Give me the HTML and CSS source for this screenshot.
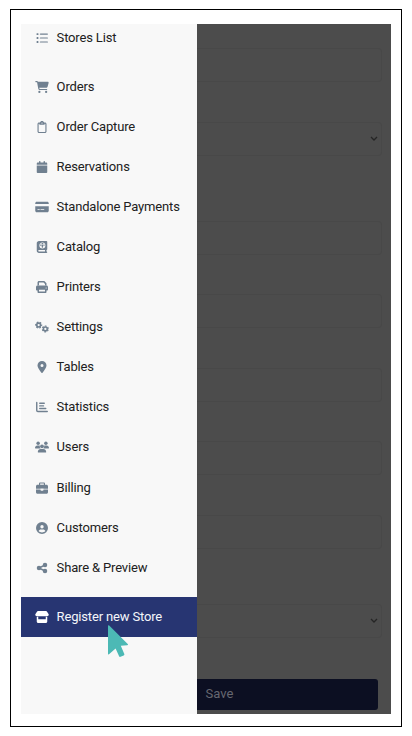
FILE: index.html
```html
<!DOCTYPE html>
<html lang="en">
<head>
<meta charset="utf-8">
<title>Register new Store</title>
<link rel="stylesheet" href="styles.css">
</head>
<body>
<div class="frame">
  <div class="screen">
    <nav class="sidebar">
      <a class="item first"><svg class="icon" viewBox="0 0 512 512"><path d="M40 48h48q16 0 16 16v48q0 16-16 16H40q-16 0-16-16V64q0-16 16-16zM192 64h288q32 0 32 24t-32 24H192q-32 0-32-24t32-24zm0 168h288q32 0 32 24t-32 24H192q-32 0-32-24t32-24zm0 168h288q32 0 32 24t-32 24H192q-32 0-32-24t32-24zM40 216h48q16 0 16 16v48q0 16-16 16H40q-16 0-16-16v-48q0-16 16-16zm0 168h48q16 0 16 16v48q0 16-16 16H40q-16 0-16-16v-48q0-16 16-16z"/></svg><span>Stores List</span></a>
      <a class="item"><svg class="icon" viewBox="0 0 576 512"><path d="M0 24C0 10.700 10.700 0 24 0h45.500c22 0 41.500 12.800 50.600 32h411c26.300 0 45.500 25 38.600 50.400l-41 152.300c-8.500 31.400-37 53.300-69.500 53.300H170.700l5.400 28.500c2.200 11.300 12.100 19.500 23.600 19.500H488c13.300 0 24 10.700 24 24s-10.700 24-24 24H199.700c-34.600 0-64.300-24.600-70.700-58.500L77.400 54.500C76.700 50.700 73.400 48 69.500 48H24C10.700 48 0 37.300 0 24z"/><circle cx="176" cy="464" r="48"/><circle cx="464" cy="464" r="48"/></svg><span>Orders</span></a>
      <a class="item"><svg class="icon" viewBox="0 0 384 512"><path fill-rule="evenodd" d="M280 64h40c35 0 64 29 64 64v320c0 35-29 64-64 64H64c-35 0-64-29-64-64V128c0-35 29-64 64-64h40C113 27 150 0 192 0s79 27 88 64zM64 112c-9 0-16 7-16 16v320c0 9 7 16 16 16h256c9 0 16-7 16-16V128c0-9-7-16-16-16h-16v24c0 13-11 24-24 24H104c-13 0-24-11-24-24v-24zM192 64a24 24 0 1 0 0 48 24 24 0 0 0 0-48z"/></svg><span>Order Capture</span></a>
      <a class="item"><svg class="icon" viewBox="0 0 448 512"><path d="M128 0c18 0 32 14 32 32v32h128V32c0-18 14-32 32-32s32 14 32 32v32h48c27 0 48 21 48 48v48H0v-48c0-27 21-48 48-48h48V32c0-18 14-32 32-32zM0 192h448v272c0 27-21 48-48 48H48c-27 0-48-21-48-48z"/></svg><span>Reservations</span></a>
      <a class="item"><svg class="icon" viewBox="0 0 576 512"><path fill-rule="evenodd" d="M64 32h448c35 0 64 29 64 64v32H0V96c0-35 29-64 64-64zM0 224h576v192c0 35-29 64-64 64H64c-35 0-64-29-64-64zm112 128c-22 0-22 32 0 32h64c22 0 22-32 0-32zm128 0c-22 0-22 32 0 32h128c22 0 22-32 0-32z"/></svg><span>Standalone Payments</span></a>
      <a class="item"><svg class="icon" viewBox="0 0 448 512"><path fill-rule="evenodd" d="M96 0h320c18 0 32 14 32 32v320c0 18-14 32-32 32v64c18 0 32 14 32 32s-14 32-32 32H96c-53 0-96-43-96-96V96C0 43 43 0 96 0zm0 384c-43 0-43 64 0 64h256v-64zM240 64a128 128 0 1 0 0 256 128 128 0 0 0 0-256z"/><path d="M140 166h38l4 52c-24-5-40-24-42-52zm56 0h88c-4 120-84 120-88 0zm106 0h38c-2 28-18 47-42 52zM145 148c6-22 20-36 40-43l-7 43zm51 0c10-80 78-80 88 0zm106 0-7-43c20 7 34 21 40 43zM218 232h44v52h-44z"/></svg><span>Catalog</span></a>
      <a class="item"><svg class="icon" viewBox="0 0 512 512"><path d="M128 0h227l93 93v99h-64v-66l-62-62H128v128H64V64c0-35 29-64 64-64z"/><path fill-rule="evenodd" d="M64 192h384c35 0 64 29 64 64v112c0 18-14 32-32 32h-32v64c0 27-21 48-48 48H112c-27 0-48-21-48-48v-64H32c-18 0-32-14-32-32V256c0-35 29-64 64-64zm64 176v80h256v-80zm304-96a24 24 0 1 0 0 48 24 24 0 0 0 0-48z"/></svg><span>Printers</span></a>
      <a class="item"><svg class="icon" viewBox="0 0 640 512"><g fill="none" stroke="currentColor"><circle cx="168" cy="168" r="88" stroke-width="72"/><circle cx="168" cy="168" r="136" stroke-width="52" stroke-dasharray="80 62.400" stroke-dashoffset="40"/><circle cx="472" cy="344" r="88" stroke-width="72"/><circle cx="472" cy="344" r="136" stroke-width="52" stroke-dasharray="80 62.400" stroke-dashoffset="111"/></g></svg><span>Settings</span></a>
      <a class="item"><svg class="icon" viewBox="0 0 384 512"><path fill-rule="evenodd" d="M216 499c51-64 168-219 168-307a192 192 0 1 0-384 0c0 88 117 243 168 307 12 15 36 15 48 0zM192 128a64 64 0 1 1 0 128 64 64 0 0 1 0-128z"/></svg><span>Tables</span></a>
      <a class="item"><svg class="icon" viewBox="0 0 512 512"><path fill="none" stroke="currentColor" stroke-width="60" stroke-linecap="round" stroke-linejoin="round" d="M32 64v336q0 48 48 48h400M160 96h192M160 208h128M160 320h256M160 208h160"/></svg><span>Statistics</span></a>
      <a class="item"><svg class="icon" viewBox="0 0 640 512"><circle cx="144" cy="80" r="80"/><circle cx="496" cy="80" r="80"/><circle cx="320" cy="224" r="88"/><path d="M107 192h74c17 0 32 4 45 11-17 48 0 88 34 117H21c-12 0-21-9-21-21 0-59 48-107 107-107zm352 0h74c59 0 107 48 107 107 0 12-9 21-21 21H380c34-29 51-69 34-117 13-7 28-11 45-11zM261 352h118c74 0 133 60 133 133 0 15-12 27-27 27H155c-15 0-27-12-27-27 0-73 59-133 133-133z"/></svg><span>Users</span></a>
      <a class="item"><svg class="icon" viewBox="0 0 512 512"><path fill-rule="evenodd" d="M176 16h160c26 0 48 22 48 48v48h64c35 0 64 29 64 64v112H320v-16H192v16H0V176c0-35 29-64 64-64h64V64c0-26 22-48 48-48zm0 48v48h160V64zM0 320h192v16c0 18 14 32 32 32h64c18 0 32-14 32-32v-16h192v112c0 35-29 64-64 64H64c-35 0-64-29-64-64z"/></svg><span>Billing</span></a>
      <a class="item"><svg class="icon" viewBox="0 0 512 512"><path fill-rule="evenodd" d="M256 0a256 256 0 1 1 0 512 256 256 0 0 1 0-512zM112 386c78 82 210 82 288 0-15-39-53-66-98-66h-92c-45 0-83 27-98 66zM256 128a72 72 0 1 0 0 144 72 72 0 0 0 0-144z"/></svg><span>Customers</span></a>
      <a class="item"><svg class="icon" viewBox="0 0 448 512"><path fill="none" stroke="currentColor" stroke-width="64" d="m352 128-256 128 256 128"/><circle cx="352" cy="128" r="96"/><circle cx="96" cy="256" r="96"/><circle cx="352" cy="384" r="96"/></svg><span>Share &amp; Preview</span></a>
      <a class="item active"><svg class="icon" viewBox="0 0 576 512"><path d="M112 0h352q20 0 32 20l70 110c30 48-8 94-64 94H74c-56 0-94-46-64-94L80 20Q92 0 112 0z"/><path fill-rule="evenodd" d="M64 250h64v102h320V250h64v198c0 35-29 64-64 64H128c-35 0-64-29-64-64z"/></svg><span>Register new Store</span></a>
    </nav>
    <main class="form">
      <div class="field"></div>
      <div class="field select"><svg class="chevron" viewBox="0 0 8 5"><path d="m1 1 3 3 3-3"/></svg></div>
      <div class="field"></div>
      <div class="field"></div>
      <div class="field"></div>
      <div class="field"></div>
      <div class="field"></div>
      <div class="field select last"><svg class="chevron" viewBox="0 0 8 5"><path d="m1 1 3 3 3-3"/></svg></div>
      <div class="save">Save</div>
    </main>
    <svg class="cursor" viewBox="0 0 20 33"><path d="M0 .8Q.2-.4 1.200.6L19.700 19q.8 1-.5 1.200l-6.400.5 3.500 8.300q.3 1-.6 1.400l-3.200 1.400q-1 .4-1.400-.5L7.600 23.500 1 29.300q-1 .6-1-.6z"/></svg>
  </div>
</div>
</body>
</html>
```
FILE: styles.css
```css
* { box-sizing: border-box; }
body {
  margin: 0;
  background: #fff;
  font-family: Roboto, "Liberation Sans", sans-serif;
}
.frame {
  width: 392px;
  height: 718px;
  margin: 9px 10px;
  border: 1px solid #000;
  padding: 14px 10px;
}
.screen {
  position: relative;
  display: flex;
  width: 370px;
  height: 690px;
  overflow: hidden;
  background: #4c4c4c;
}
.sidebar {
  flex: none;
  width: 175.500px;
  height: 700px;
  margin-top: -6.500px;
  background: #f8f8f8;
}
.item {
  display: flex;
  align-items: center;
  gap: 7.600px;
  height: 40.100px;
  padding-left: 14px;
  color: #212121;
  font-size: 13px;
  letter-spacing: -.16px;
  line-height: 20px;
  white-space: nowrap;
}
.item.first { margin-bottom: 9px; }
.item.active {
  height: 40px;
  margin-top: 9.100px;
  background: #273572;
  color: #f4f5fa;
}
.icon {
  flex: none;
  width: 14px;
  height: 12px;
  color: #708090;
  fill: currentColor;
}
.active .icon { color: #fff; }
.form {
  flex: 1;
  display: flex;
  flex-direction: column;
  padding: 24px 9.500px 0 0;
}
.field {
  flex: none;
  height: 34px;
  margin-bottom: 39.600px;
  border: 1px solid #484848;
  border-left: 0;
  border-radius: 0 4px 4px 0;
}
.field.select {
  display: flex;
  align-items: center;
  justify-content: flex-end;
  padding-right: 3px;
  margin-bottom: 65px;
}
.field.last {
  margin-top: 15px;
  margin-bottom: 41px;
}
.chevron {
  width: 8px;
  height: 5px;
  fill: none;
  stroke: #252525;
  stroke-width: 1.300;
}
.save {
  height: 31px;
  margin-right: 4px;
  padding-left: 9px;
  border-radius: 0 3px 3px 0;
  background: #0c0f22;
  color: #666770;
  font-size: 13px;
  line-height: 30px;
}
.cursor {
  position: absolute;
  left: 87px;
  top: 601px;
  width: 20px;
  height: 33px;
  fill: #4cb9b5;
}
```
